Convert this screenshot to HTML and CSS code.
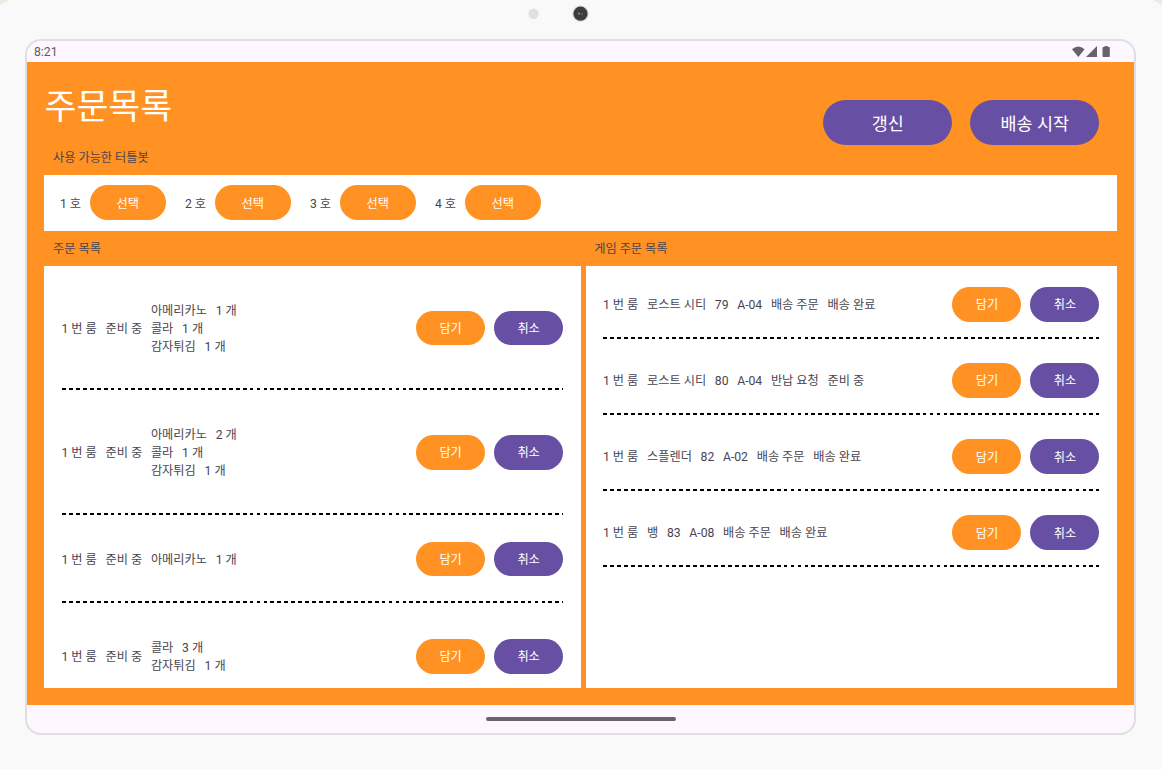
FILE: index.html
```html
<!DOCTYPE html>
<html lang="ko">
<head>
<meta charset="utf-8">
<title>주문목록</title>
<link rel="stylesheet" href="styles.css">
</head>
<body>
<div class="device">
  <div class="camera-bar">
    <svg width="70" height="28" viewBox="0 0 70 28">
      <circle cx="11.6" cy="13.7" r="5.2" fill="#e1e1e1"/>
      <circle cx="58.5" cy="13.7" r="8.3" fill="#dedede"/>
      <circle cx="58.5" cy="13.7" r="7.1" fill="#3c3c3c"/>
      <circle cx="57" cy="13.4" r="1" fill="#999"/>
      <circle cx="60" cy="14.2" r=".9" fill="#666"/>
    </svg>
  </div>
  <div class="screen">
    <div class="status-bar">
      <span class="clock">8:21</span>
      <svg class="status-icons" width="40" height="12" viewBox="0 0 40 12">
        <path d="M0 3.200Q6.200-2.400 12.600 3.200L6.300 11Z" fill="#68636a"/>
        <path d="M25 0V11H14Z" fill="#68636a"/>
        <path d="M31.300 1h1.200V0h3.200v1h1.300q.8 0 .8.8v8.400q0 .8-.8.8h-5.700q-.8 0-.8-.8V1.800q0-.8.8-.8Z" fill="#68636a"/>
      </svg>
    </div>
    <main class="app">
      <header class="header">
        <h1 class="title">주문목록</h1>
        <div class="header-actions">
          <button class="btn btn-large">갱신</button>
          <button class="btn btn-large">배송 시작</button>
        </div>
      </header>
      <div class="label">사용 가능한 터틀봇</div>
      <section class="robots">
        <div class="robot"><span>1 호</span><button class="btn btn-select">선택</button></div>
        <div class="robot"><span>2 호</span><button class="btn btn-select">선택</button></div>
        <div class="robot"><span>3 호</span><button class="btn btn-select">선택</button></div>
        <div class="robot"><span>4 호</span><button class="btn btn-select">선택</button></div>
      </section>
      <div class="columns">
        <div class="label">주문 목록</div>
        <div class="label label-games">게임 주문 목록</div>
        <section class="panel orders">
          <div class="row">
            <span>1 번 룸</span><span>준비 중</span>
            <div class="menu"><div class="item"><span>아메리카노</span><span>1 개</span></div><div class="item"><span>콜라</span><span>1 개</span></div><div class="item"><span>감자튀김</span><span>1 개</span></div></div>
            <div class="actions"><button class="btn btn-load">담기</button><button class="btn">취소</button></div>
          </div>
          <div class="row">
            <span>1 번 룸</span><span>준비 중</span>
            <div class="menu"><div class="item"><span>아메리카노</span><span>2 개</span></div><div class="item"><span>콜라</span><span>1 개</span></div><div class="item"><span>감자튀김</span><span>1 개</span></div></div>
            <div class="actions"><button class="btn btn-load">담기</button><button class="btn">취소</button></div>
          </div>
          <div class="row">
            <span>1 번 룸</span><span>준비 중</span>
            <div class="menu"><div class="item"><span>아메리카노</span><span>1 개</span></div></div>
            <div class="actions"><button class="btn btn-load">담기</button><button class="btn">취소</button></div>
          </div>
          <div class="row">
            <span>1 번 룸</span><span>준비 중</span>
            <div class="menu"><div class="item"><span>콜라</span><span>3 개</span></div><div class="item"><span>감자튀김</span><span>1 개</span></div></div>
            <div class="actions"><button class="btn btn-load">담기</button><button class="btn">취소</button></div>
          </div>
        </section>
        <section class="panel games">
          <div class="row">
            <span>1 번 룸</span><span>로스트 시티</span><span>79</span><span>A-04</span><span>배송 주문</span><span>배송 완료</span>
            <div class="actions"><button class="btn btn-load">담기</button><button class="btn">취소</button></div>
          </div>
          <div class="row">
            <span>1 번 룸</span><span>로스트 시티</span><span>80</span><span>A-04</span><span>반납 요청</span><span>준비 중</span>
            <div class="actions"><button class="btn btn-load">담기</button><button class="btn">취소</button></div>
          </div>
          <div class="row">
            <span>1 번 룸</span><span>스플렌더</span><span>82</span><span>A-02</span><span>배송 주문</span><span>배송 완료</span>
            <div class="actions"><button class="btn btn-load">담기</button><button class="btn">취소</button></div>
          </div>
          <div class="row">
            <span>1 번 룸</span><span>뱅</span><span>83</span><span>A-08</span><span>배송 주문</span><span>배송 완료</span>
            <div class="actions"><button class="btn btn-load">담기</button><button class="btn">취소</button></div>
          </div>
        </section>
      </div>
    </main>
    <div class="nav-bar"><div class="nav-handle"></div></div>
  </div>
</div>
</body>
</html>
```
FILE: styles.css
```css
* { box-sizing: border-box; }

html { background: #eeeadf; }

body {
  margin: 0;
  overflow: hidden;
  font-family: Roboto, "Noto Sans CJK KR", sans-serif;
  font-size: 12.2px;
  line-height: 18.2px;
  color: #49454f;
}

.device {
  width: 1162px;
  height: 769px;
  background: #f9f9f9;
  clip-path: polygon(9px 0, 1153px 0, 1162px 5px, 1162px 769px, 0 769px, 0 5px);
}

.camera-bar { height: 39px; padding-left: 522px; }
.camera-bar svg { display: block; }

.screen {
  width: 1111px;
  height: 696px;
  margin-left: 25px;
  border: 2px solid #dfdfe1;
  border-radius: 16px;
  overflow: hidden;
  display: flex;
  flex-direction: column;
  background: #fef7ff;
}

.status-bar {
  height: 21px;
  padding: 0 22px 0 7px;
  display: flex;
  align-items: center;
  justify-content: space-between;
}
.clock { padding-top: 2px; color: #5f5b62; }

.app {
  height: 643px;
  padding: 0 17px 17px;
  background: #ff9222;
}

.header {
  height: 78px;
  display: flex;
  justify-content: space-between;
}
.title {
  margin: 19px 0 0;
  padding-left: 0.5px;
  font-size: 34.7px;
  font-weight: 400;
  line-height: 52px;
  color: #fff;
}
.header-actions {
  display: flex;
  gap: 17.5px;
  padding: 38px 18px 0 0;
}

.btn {
  width: 69.3px;
  height: 34.6px;
  padding: 2px 0 0 0.5px;
  border: 0;
  border-radius: 18px;
  background: #6750a4;
  color: #fff;
  font: inherit;
}
.btn-large { width: 129.5px; height: 45.2px; padding: 3px 0 0 1px; border-radius: 23px; font-size: 17.4px; }
.btn-select { width: 76px; background: #ff9222; }
.btn-load { background: #ff9222; }

.label {
  height: 35px;
  padding: 1px 0 0 9px;
  line-height: 35px;
}
.label-games { padding-left: 8.2px; }

.robots {
  height: 55.5px;
  padding: 0 15.5px;
  display: flex;
  align-items: center;
  gap: 19px;
  background: #fff;
}
.robot { width: 106px; display: flex; justify-content: space-between; align-items: center; }
.robot span { padding: 2.5px 0 0 0.5px; }

.columns {
  display: grid;
  grid-template-columns: 536.5px 531px;
  grid-template-rows: 35.5px 422px;
  column-gap: 5.5px;
}

.panel { background: #fff; overflow: hidden; }
.orders { padding: 0 17.5px; }
.games { padding: 0 17.7px 0 17px; }

.row {
  display: flex;
  align-items: center;
  gap: 8.7px;
  background: repeating-linear-gradient(90deg, #000 0 3.8px, transparent 3.8px 6.95px) left bottom / 100% 2px no-repeat;
  white-space: nowrap;
}
.orders .row { padding: 36.1px 0 34px; }
.orders .row:first-child { padding: 35.6px 0 33.7px; }
.games .row { height: 76.1px; padding-top: 8.5px; }
.games .row:first-child { height: 73px; padding-top: 5.5px; }

.item { display: flex; gap: 8.8px; }

/* The buttons are taller than a text line and may overflow it. */
.actions {
  display: flex;
  gap: 8.7px;
  height: 18.2px;
  align-items: center;
  margin: -1.5px 0 0 auto;
}

.nav-bar { height: 28px; display: flex; justify-content: center; align-items: center; }
.nav-handle { width: 190px; height: 4px; border-radius: 2px; background: #68636a; }
```
